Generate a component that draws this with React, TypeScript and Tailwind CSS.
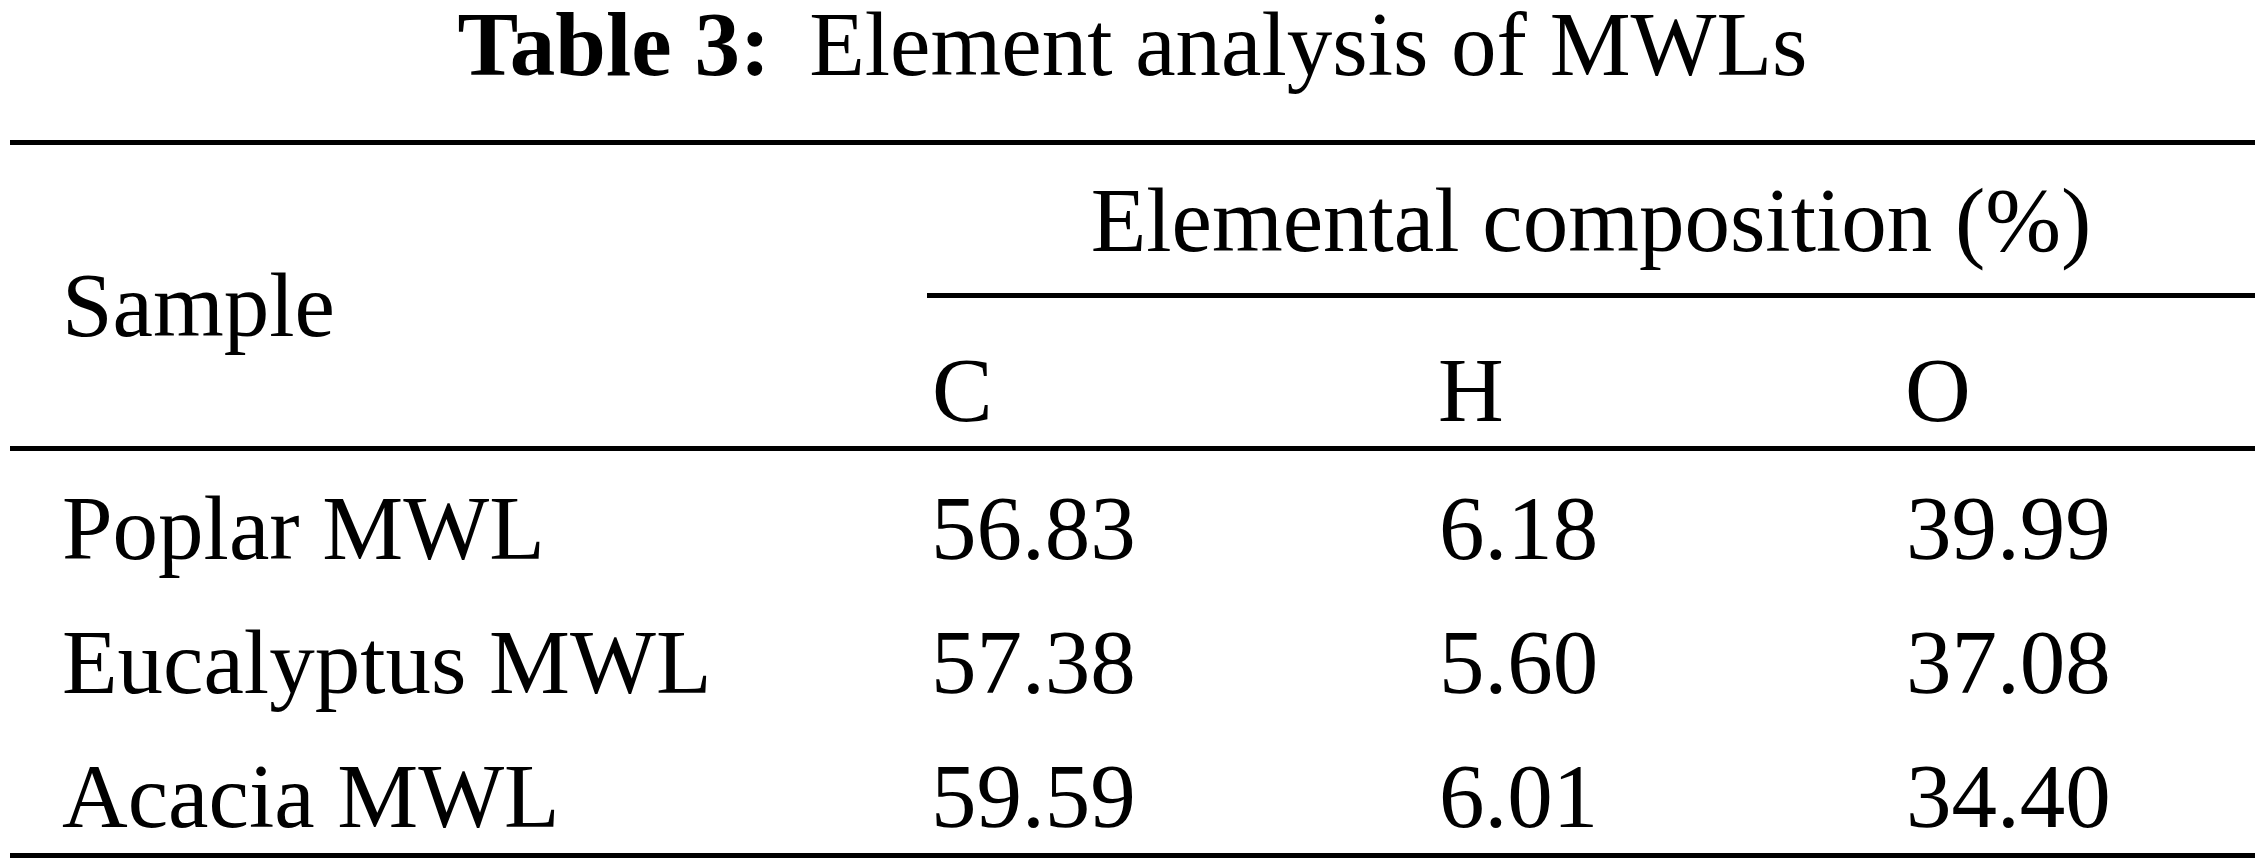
const rows = [
  { sample: 'Poplar MWL', c: '56.83', h: '6.18', o: '39.99' },
  { sample: 'Eucalyptus MWL', c: '57.38', h: '5.60', o: '37.08' },
  { sample: 'Acacia MWL', c: '59.59', h: '6.01', o: '34.40' },
];

const cols = 'grid grid-cols-[917px_508px_467px_1fr]';

export default function App() {
  return (
    <div className="min-h-screen bg-white text-black font-['Liberation_Serif','Times_New_Roman',serif] text-[91px]">
      <h1 className="text-center leading-[90px] font-normal whitespace-nowrap">
        <span className="font-bold">Table 3:</span>
        <span className="ml-[39px]">Element analysis of MWLs</span>
      </h1>

      <div className="mx-[10px] mt-[50px] border-t-[5px] border-black">
        {/* header */}
        <div className={`${cols} border-b-[5px] border-black`}>
          <div className="row-span-2 pl-[52px] pt-[111px] leading-[100px] whitespace-nowrap">Sample</div>
          <div className="col-span-3 border-b-[5px] border-black pt-[26px] pb-[22px] text-center leading-[100px] whitespace-nowrap">
            Elemental composition (%)
          </div>
          <div className="pl-[5px] pt-[43px] pb-[5px] leading-[100px]">C</div>
          <div className="pl-[3px] pt-[43px] pb-[5px] leading-[100px]">H</div>
          <div className="pl-[3px] pt-[43px] pb-[5px] leading-[100px]">O</div>
        </div>

        {/* body */}
        <div className="border-b-[5px] border-black">
          {rows.map((r) => (
            <div key={r.sample} className={`${cols} pt-[28px] pb-[6px] leading-[100px]`}>
              <div className="pl-[52px] whitespace-nowrap">{r.sample}</div>
              <div className="pl-[4px]">{r.c}</div>
              <div className="pl-[4px]">{r.h}</div>
              <div className="pl-[4px]">{r.o}</div>
            </div>
          ))}
        </div>
      </div>
    </div>
  );
}
